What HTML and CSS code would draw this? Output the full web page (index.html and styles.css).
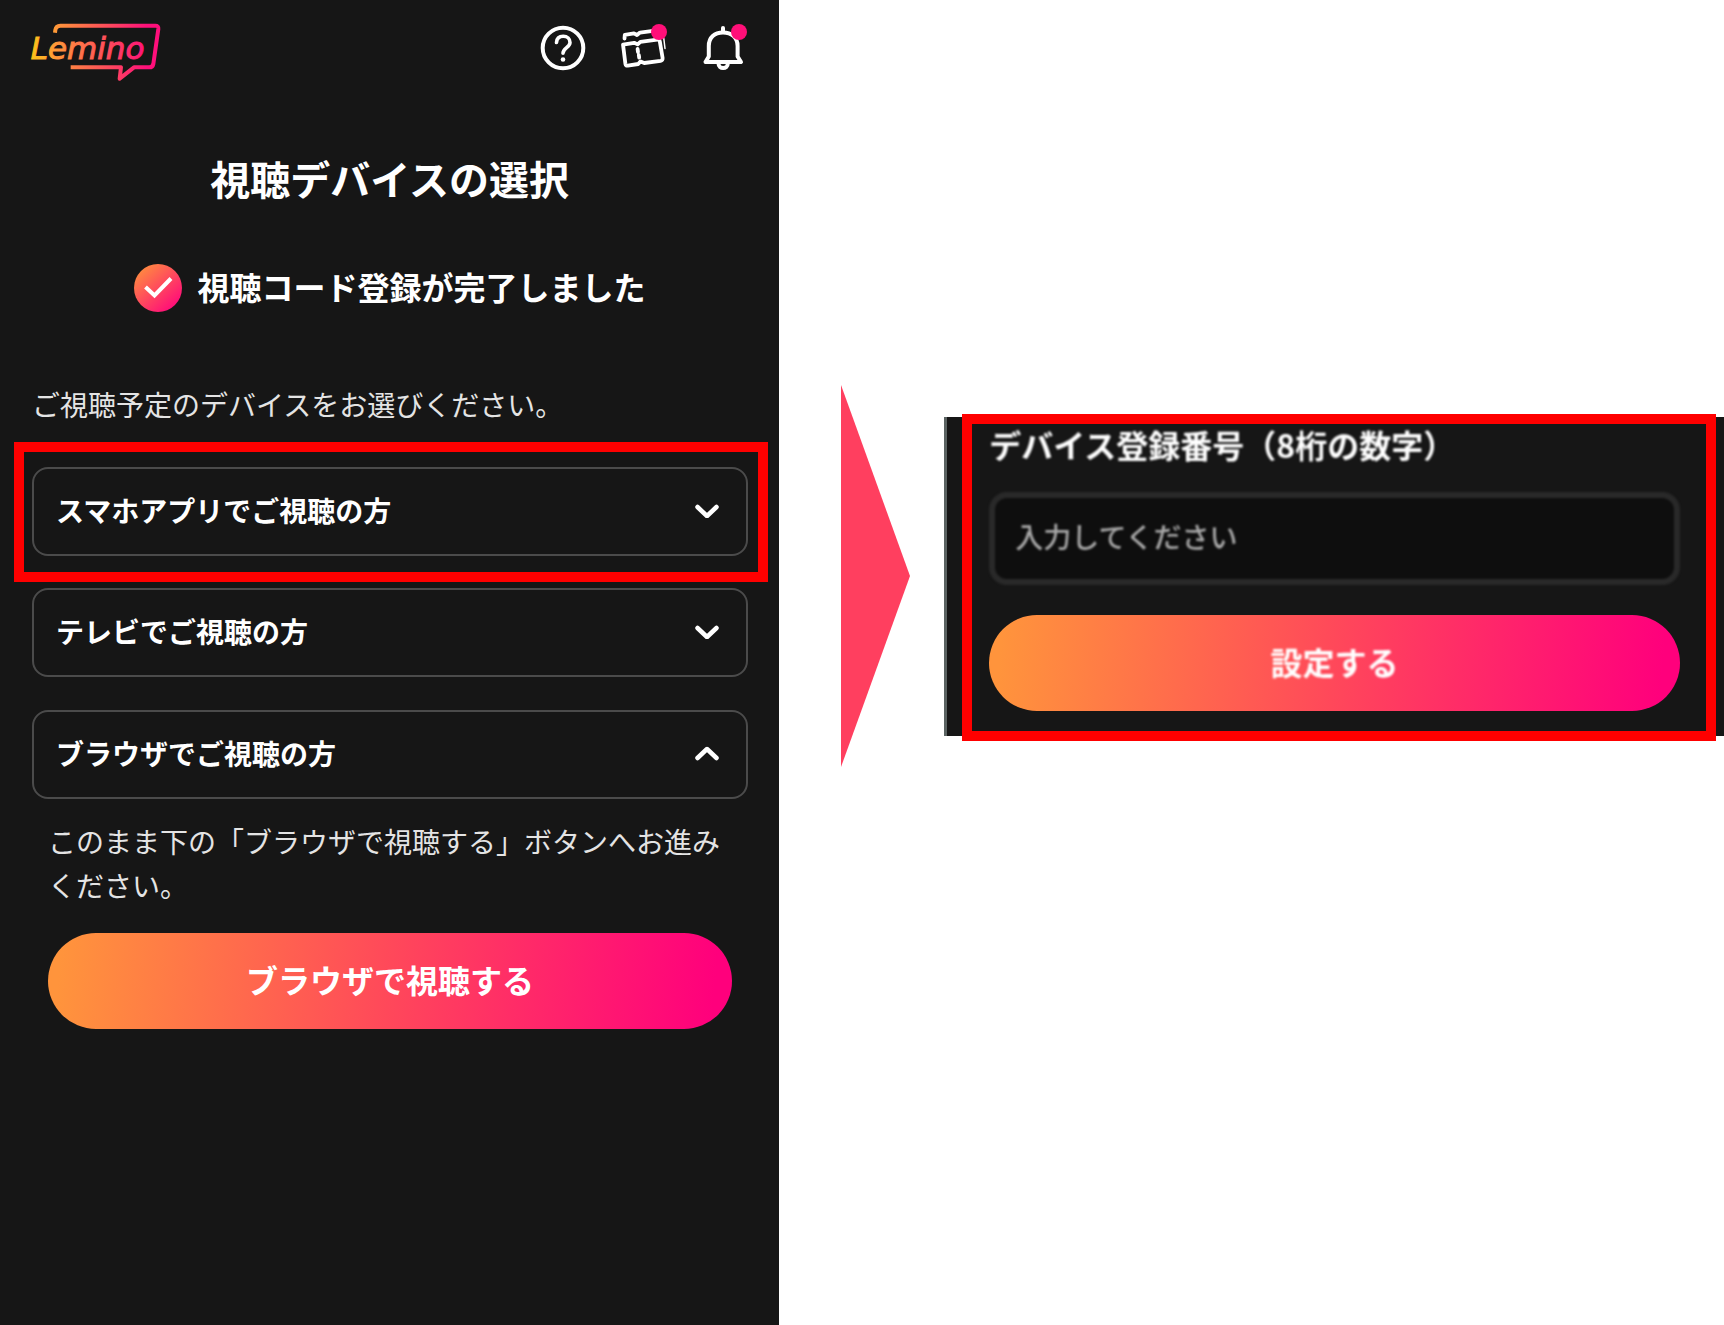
FILE: index.html
```html
<!DOCTYPE html>
<html lang="ja">
  <head>
    <meta charset="UTF-8" />
    <meta name="viewport" content="width=device-width, initial-scale=1.0" />
    <title>視聴デバイスの選択 - Lemino</title>
    <link rel="stylesheet" href="styles.css">
  </head>
  <body>
    <main class="screen">
      <header class="header">
        <a href="#" class="logo" aria-label="Lemino">
          <svg width="132" height="58" viewBox="90 72 396 174">
            <defs>
              <linearGradient id="logoGradient" gradientUnits="userSpaceOnUse" x1="95" y1="0" x2="480" y2="0">
                <stop offset="0" stop-color="#fcc419" />
                <stop offset="0.2" stop-color="#ff953a" />
                <stop offset="0.6" stop-color="#ff4a5c" />
                <stop offset="0.9" stop-color="#ff0f7b" />
              </linearGradient>
            </defs>
            <path
              d="M165 98 L166 90 Q168 77 181 77 L466 77 Q476 77 475 87 L460 192 Q458 202 448 202 L402 202 L359 236 L363 202 L212 202"
              fill="none" stroke="url(#logoGradient)" stroke-width="12" stroke-linejoin="round" />
            <text x="92" y="178" class="logo-text" fill="url(#logoGradient)" stroke="url(#logoGradient)" stroke-width="3">Lemino</text>
          </svg>
        </a>
        <nav class="header-nav">
          <a href="#" class="icon-link" aria-label="ヘルプ">
            <svg width="48" height="48" viewBox="0 0 48 48" fill="none" stroke="#fff" stroke-width="4" stroke-linecap="round">
              <circle cx="24" cy="24" r="20.3" />
              <path d="M17.5 18.5 C17.8 14 20.8 12.3 24.2 12.3 C28.3 12.3 31 15 31 18.5 C31 23.4 24 24 24 29.3" stroke-width="3.6" />
              <circle cx="24" cy="35.5" r="2.3" fill="#fff" stroke="none" />
            </svg>
          </a>
          <a href="#" class="icon-link" aria-label="チケット">
            <svg width="48" height="48" viewBox="0 0 48 48" fill="none" stroke="#fff" stroke-width="3.8" stroke-linejoin="round" stroke-linecap="round">
              <path d="M5.5 14.5 L5.8 10.8 L15 9.4 L18 11 L21 8.6 L36 6.6" />
              <path d="M44.8 14.5 L46 24.5" stroke-width="1.5" />
              <path d="M4 20.6 L15.2 18.8 L18.6 20.4 L21.4 17.8 L38.2 15.6 Q40.4 15.4 40.8 17.4 L43.6 34 Q43.8 36.4 41.6 36.8 L25.2 39 L21.6 37.4 L19.2 40 L8.8 41.6 Q6.8 41.8 6.4 39.8 Z" />
              <path d="M18.6 25 L19 28 M19.8 31 L20.2 33.6" />
            </svg>
            <span class="dot"></span>
          </a>
          <a href="#" class="icon-link" aria-label="お知らせ">
            <svg width="48" height="48" viewBox="0 0 48 48" fill="none" stroke="#fff" stroke-width="4" stroke-linejoin="round" stroke-linecap="round">
              <path d="M24 4 V8" />
              <path d="M6.5 38 L9.8 32.5 V22 C9.8 13.5 15.5 8.5 24 8.5 C32.5 8.5 38.6 13.5 38.6 22 V32.5 L42 38 Z" />
              <path d="M19.5 39.5 C19.5 45.5 28.8 45.5 28.8 39.5" />
            </svg>
            <span class="dot"></span>
          </a>
        </nav>
      </header>

      <h1 class="title">視聴デバイスの選択</h1>

      <div class="notice">
        <svg width="48" height="48" viewBox="0 0 48 48">
          <defs>
            <linearGradient id="checkGradient" x1="0.1" y1="0.1" x2="0.8" y2="0.9">
              <stop offset="0" stop-color="#ff8c3f" />
              <stop offset="1" stop-color="#ff0f78" />
            </linearGradient>
          </defs>
          <circle cx="24" cy="24" r="24" fill="url(#checkGradient)" />
          <path d="M11.5 23 L20.5 31.5 L37 14.5" fill="none" stroke="#fff" stroke-width="4" />
        </svg>
        <p>視聴コード登録が完了しました</p>
      </div>

      <p class="lead">ご視聴予定のデバイスをお選びください。</p>

      <div class="highlight highlight-item">
        <button type="button" class="accordion" aria-expanded="false">
          スマホアプリでご視聴の方
          <svg class="chevron" width="24" height="16" viewBox="0 0 24 16"><path d="M2.5 5 L12 14 L21.5 5" /></svg>
        </button>
      </div>

      <div class="items">
        <button type="button" class="accordion" aria-expanded="false">
          テレビでご視聴の方
          <svg class="chevron" width="24" height="16" viewBox="0 0 24 16"><path d="M2.5 5 L12 14 L21.5 5" /></svg>
        </button>
        <button type="button" class="accordion" aria-expanded="true" aria-controls="browserPanel">
          ブラウザでご視聴の方
          <svg class="chevron" width="24" height="16" viewBox="0 0 24 16"><path d="M2.5 13 L12 4 L21.5 13" /></svg>
        </button>
      </div>

      <div class="panel" id="browserPanel">
        <p>このまま下の「ブラウザで視聴する」ボタンへお進みください。</p>
        <button type="button" class="btn">ブラウザで視聴する</button>
      </div>
    </main>

    <div class="next-step">
      <svg class="arrow" width="69" height="382" viewBox="0 0 69 382">
        <path d="M0 0 L69 191 L0 382 Z" fill="#ff3f5f" />
      </svg>

      <section class="code">
        <form class="highlight code-form">
          <label for="deviceCode">デバイス登録番号（8桁の数字）</label>
          <input
            type="text"
            name="deviceCode"
            id="deviceCode"
            inputmode="numeric"
            maxlength="8"
            placeholder="入力してください"
          />
          <button type="submit" class="btn"><span>設定する</span></button>
        </form>
      </section>
    </div>
  </body>
</html>
```

FILE: styles.css
```css
:root {
  --bg: #161616;
  --line: #4b4b4b;
  --mark: #ff0000;
  --pink: #ff0f78;
  --gradient: linear-gradient(95deg, #ff943c 2%, #ff485a 50%, #ff007c 97%);
}

* {
  box-sizing: border-box;
  margin: 0;
  padding: 0;
  font-family: "Noto Sans CJK JP", "Noto Sans", sans-serif;
}

body {
  background: #fff;
  color: #fff;
  min-height: 100vh;
  display: flex;
}

svg {
  display: block;
  flex-shrink: 0;
}

.screen {
  flex: 0 0 45.2%;
  background: var(--bg);
  padding: 24px 0;
}

.header {
  display: flex;
  justify-content: space-between;
  align-items: flex-start;
  padding: 0 32px 0 30px;
}

.logo svg {
  overflow: visible;
}

.logo-text {
  font-family: "DejaVu Sans", sans-serif;
  font-style: italic;
  font-size: 93px;
}

.header-nav {
  display: flex;
  gap: 32px;
}

.icon-link {
  position: relative;
}

.dot {
  position: absolute;
  top: 0;
  right: 0;
  width: 16px;
  height: 16px;
  border-radius: 50%;
  background: var(--pink);
}

.title {
  margin-top: 72px;
  font-size: 40px;
  font-weight: 700;
  line-height: 48px;
  text-align: center;
}

.notice {
  display: flex;
  justify-content: center;
  align-items: center;
  gap: 16px;
  margin-top: 62px;
  font-size: 32px;
  font-weight: 700;
  line-height: 48px;
}

.notice p {
  padding-bottom: 4px;
  line-height: 44px;
}

.lead {
  margin-top: 70px;
  padding: 0 32px;
  color: #e4e4e4;
  font-size: 28px;
  font-weight: 400;
  line-height: 44px;
}

/* Red frame round the part to operate */
.highlight {
  border: 10px solid var(--mark);
}

.highlight-item {
  margin: 16px 11px 0 14px;
  padding: 15px 10px 16px 8px;
}

.items {
  display: flex;
  flex-direction: column;
  gap: 33px;
  margin-top: 6px;
  padding: 0 31px 0 32px;
}

.accordion {
  display: flex;
  justify-content: space-between;
  align-items: center;
  width: 100%;
  height: 89px;
  padding: 0 27px 4px 22px;
  border: 2px solid var(--line);
  border-radius: 16px;
  background: transparent;
  color: #fff;
  font-size: 28px;
  font-weight: 700;
  text-align: left;
  cursor: pointer;
}

.chevron path {
  fill: none;
  stroke: #fff;
  stroke-width: 4.5;
  stroke-linecap: round;
  stroke-linejoin: round;
}

.panel {
  padding: 20px 47px 0 48px;
}

.panel p {
  margin-bottom: 26px;
  color: #e4e4e4;
  font-size: 28px;
  font-weight: 400;
  line-height: 44px;
}

.btn {
  display: block;
  width: 100%;
  height: 96px;
  padding-bottom: 4px;
  border: none;
  border-radius: 48px;
  background: var(--gradient);
  color: #fff;
  font-size: 32px;
  font-weight: 700;
  cursor: pointer;
}

.next-step {
  flex: 1;
  display: flex;
  align-items: center;
  align-self: flex-start;
  padding: 385px 0 0 62px;
}

.code {
  flex: 1;
  display: flex;
  height: 319px;
  margin-left: 34px;
  padding: 0 8px 0 15px;
  border-left: 3px solid #5b6362;
  background: var(--bg);
}

/* The frame is a little taller than the dark area behind it */
.code-form {
  flex: 1;
  margin: -3px 0 -5px;
  padding: 0 26px 0 17px;
}

.code-form label {
  display: block;
  padding-bottom: 4px;
  margin-bottom: 24px;
  font-size: 32px;
  font-weight: 700;
  line-height: 40px;
  filter: blur(1px);
}

.code-form input {
  display: block;
  width: 100%;
  height: 93px;
  margin-bottom: 30px;
  padding: 0 20px 4px;
  border: 6px solid #292929;
  border-radius: 18px;
  background: #0e0e0e;
  color: #fff;
  font-size: 28px;
  font-weight: 500;
  filter: blur(1px);
}

.code-form input::placeholder {
  color: #a8a8a8;
}

.code-form .btn span {
  filter: blur(1px);
}

/* Responsive */
@media (max-width: 1200px) {
  body {
    flex-direction: column;
  }

  .next-step {
    width: 100%;
    padding: 40px 0;
  }
}
```
